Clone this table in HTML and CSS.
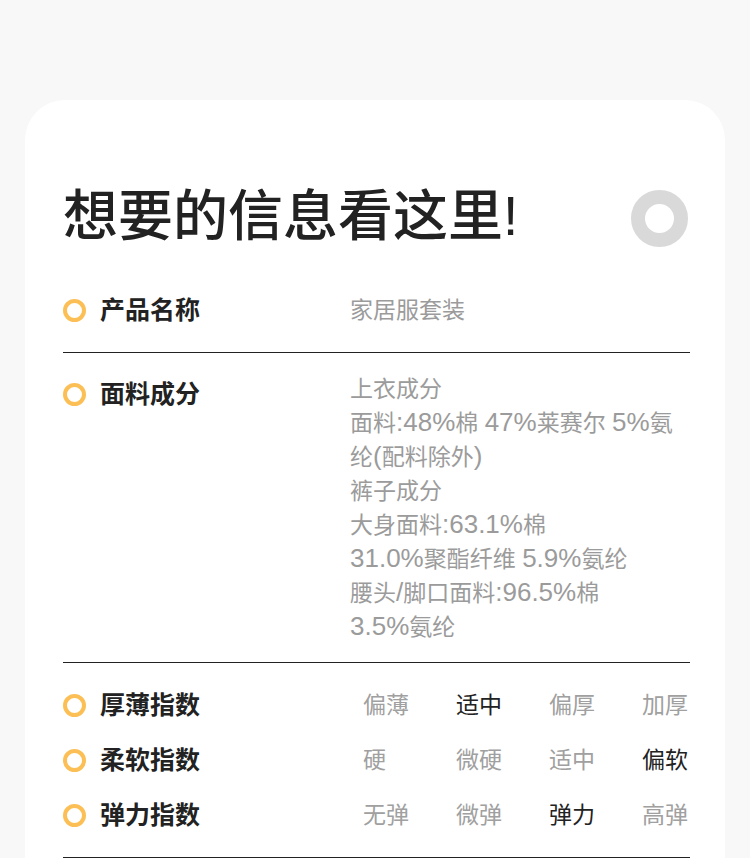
FILE: index.html
```html
<!DOCTYPE html>
<html lang="zh-CN">
<head>
<meta charset="utf-8">
<link rel="stylesheet" href="styles.css">
</head>
<body>
<div class="card">
  <div class="head">
    <h1 class="title">想要的信息看这里!</h1>
    <span class="deco-ring"></span>
  </div>

  <div class="section sec-name">
    <div class="row">
      <div class="label"><span class="dot"></span>产品名称</div>
      <div class="value">家居服套装</div>
    </div>
  </div>

  <div class="section sec-fabric">
    <div class="row">
      <div class="label"><span class="dot"></span>面料成分</div>
      <div class="value multi">
        <span class="line">上衣成分</span>
        <span class="line">面料<span class="num">:48%</span>棉 <span class="num">47%</span>莱赛尔 <span class="num">5%</span>氨</span>
        <span class="line">纶<span class="num">(</span>配料除外<span class="num">)</span></span>
        <span class="line">裤子成分</span>
        <span class="line">大身面料<span class="num">:63.1%</span>棉</span>
        <span class="line"><span class="num">31.0%</span>聚酯纤维 <span class="num">5.9%</span>氨纶</span>
        <span class="line">腰头<span class="num">/</span>脚口面料<span class="num">:96.5%</span>棉</span>
        <span class="line"><span class="num">3.5%</span>氨纶</span>
      </div>
    </div>
  </div>

  <div class="section sec-index">
    <div class="irow">
      <div class="label"><span class="dot"></span>厚薄指数</div>
      <div class="opts">
        <span class="opt">偏薄</span>
        <span class="opt on">适中</span>
        <span class="opt">偏厚</span>
        <span class="opt">加厚</span>
      </div>
    </div>
    <div class="irow">
      <div class="label"><span class="dot"></span>柔软指数</div>
      <div class="opts">
        <span class="opt">硬</span>
        <span class="opt">微硬</span>
        <span class="opt">适中</span>
        <span class="opt on">偏软</span>
      </div>
    </div>
    <div class="irow">
      <div class="label"><span class="dot"></span>弹力指数</div>
      <div class="opts">
        <span class="opt">无弹</span>
        <span class="opt">微弹</span>
        <span class="opt on">弹力</span>
        <span class="opt">高弹</span>
      </div>
    </div>
  </div>
</div>
</body>
</html>
```

FILE: styles.css
```css
html, body {
  margin: 0;
  padding: 0;
}
body {
  background: #f8f8f8;
  font-family: "Liberation Sans", "Noto Sans CJK SC", sans-serif;
  color: #222;
  height: 858px;
  overflow: hidden;
}
.card {
  margin: 100px 25px 0;
  background: #fff;
  border-radius: 40px 40px 0 0;
  padding: 87px 35px 0 38px;
  min-height: 800px;
}
.head {
  display: flex;
  align-items: center;
  justify-content: space-between;
}
.title {
  margin: 0;
  font-size: 55px;
  line-height: 56px;
  font-weight: 500;
  color: #222;
}
.deco-ring {
  width: 29px;
  height: 29px;
  border: 14px solid #d9d9d9;
  border-radius: 50%;
  margin: 3px 2px -3px 0;
}
.section {
  border-bottom: 1px solid #222;
}
.sec-name {
  padding: 44px 0 20px;
}
.sec-fabric {
  padding: 19px 0 18px;
}
.sec-index {
  padding: 15px 0 14px;
}
.row {
  display: flex;
  align-items: flex-start;
}
.label {
  width: 287px;
  flex: none;
  display: flex;
  align-items: center;
  font-size: 25px;
  line-height: 44px;
  font-weight: 700;
  color: #222;
}
.dot {
  width: 15px;
  height: 15px;
  border: 4px solid #fcbf55;
  border-radius: 50%;
  margin-right: 14px;
  flex: none;
}
.value {
  font-size: 23px;
  line-height: 44px;
  color: #9b9b9b;
}
.value.multi {
  line-height: 34px;
}
.line {
  display: block;
  white-space: nowrap;
}
.num {
  font-size: 26px;
  line-height: 1;
}
.irow {
  display: flex;
  align-items: center;
  height: 55px;
}
.irow .label {
  line-height: 55px;
}
.opts {
  flex: 1;
  display: flex;
  justify-content: space-between;
  margin-left: 13px;
  margin-right: 2px;
  font-size: 23px;
  line-height: 55px;
}
.opt {
  width: 46px;
  color: #a0a0a0;
  white-space: nowrap;
}
.opt.on {
  color: #222;
}
```
